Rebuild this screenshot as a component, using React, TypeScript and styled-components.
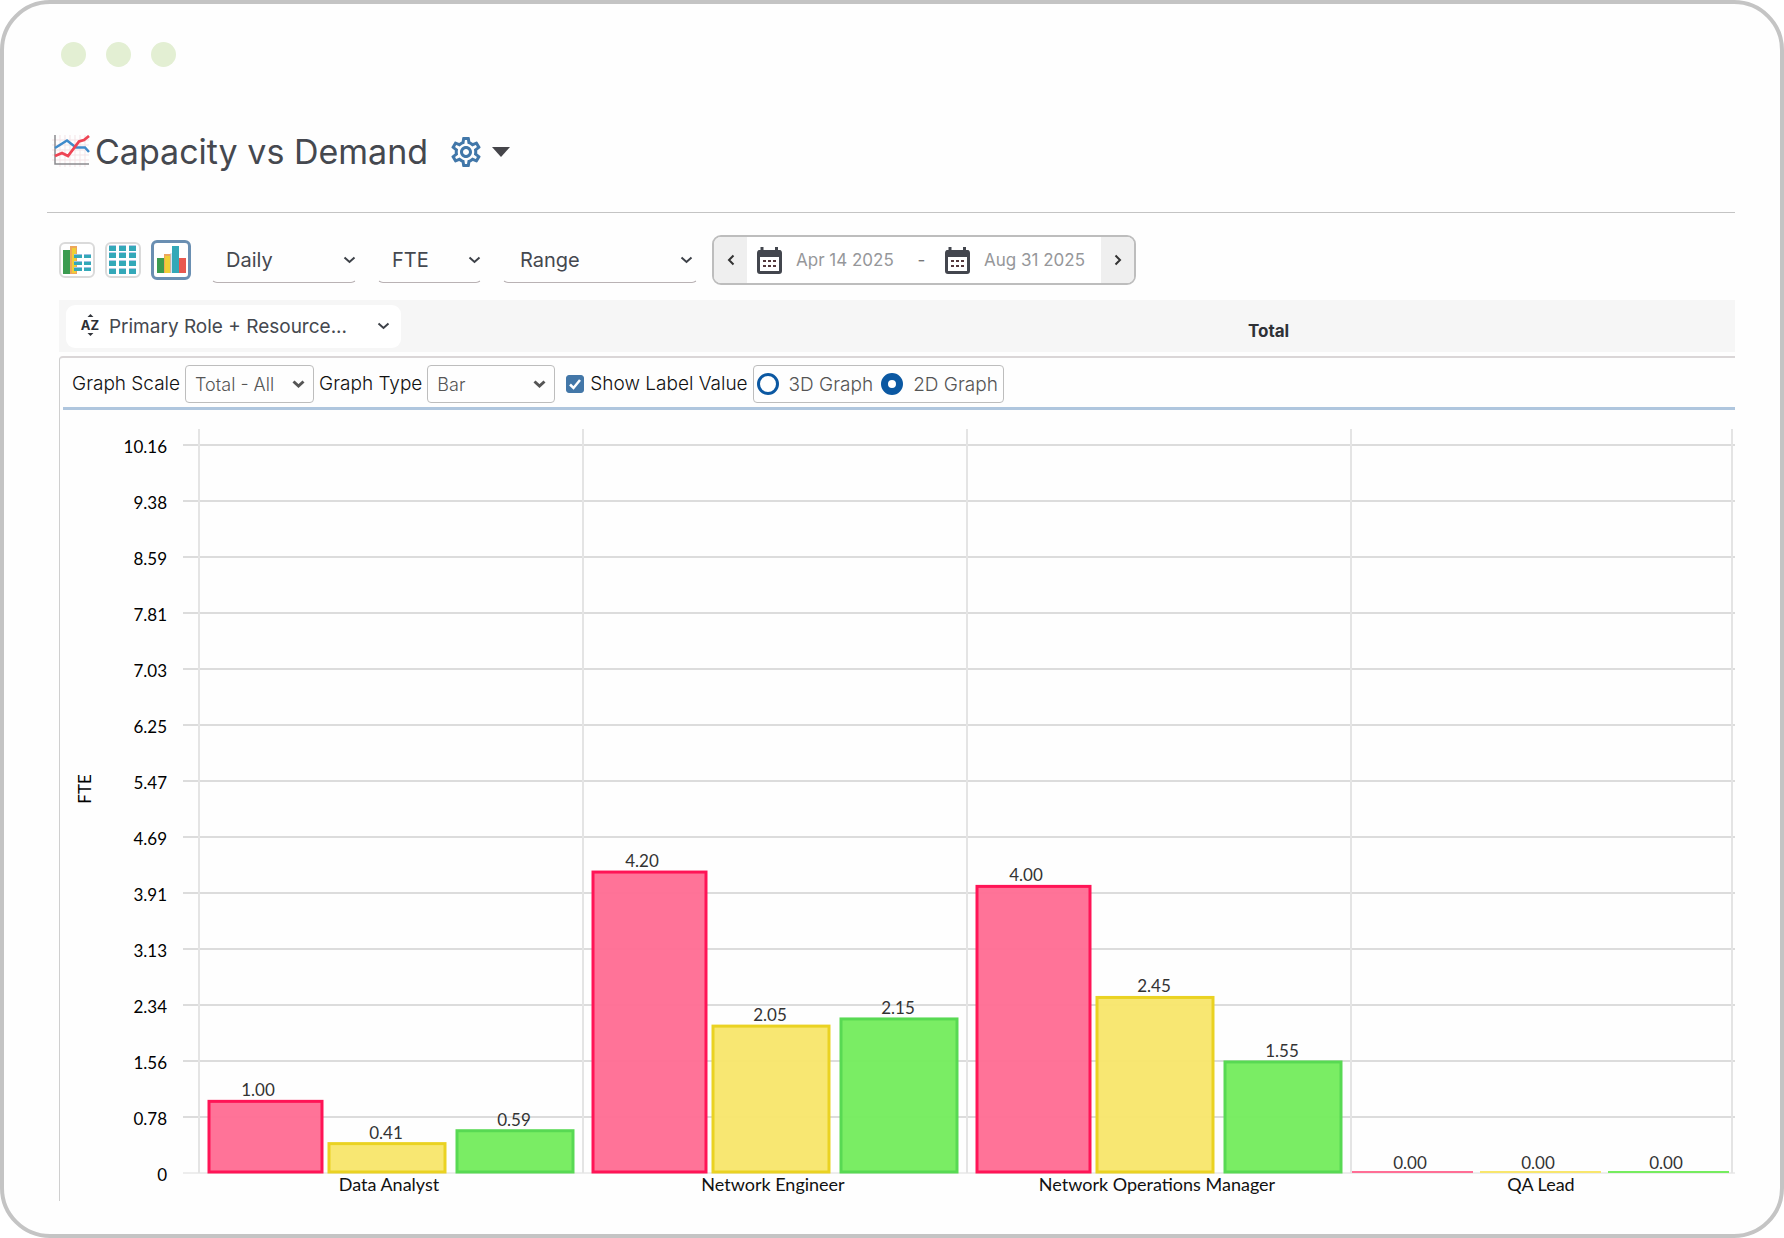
import React, { useState } from "react";
import styled, { createGlobalStyle } from "styled-components";
import { MdOutlineSettings } from "react-icons/md";

const GlobalStyle = createGlobalStyle`
  *, *::before, *::after { box-sizing: border-box; }
  body { margin: 0; background: #fff; font-family: Inter, "Liberation Sans", sans-serif; color: #45484f; }
  button, input, select { font: inherit; color: inherit; margin: 0; }
`;

const Window = styled.main`
  min-height: 100vh;
  padding: 38px 45px 33px 43px;
  border: 4px solid #c4c4c4;
  border-radius: 50px;
  background: #fefefe;
`;

const Dots = styled.div`
  display: flex;
  gap: 20px;
  padding-left: 14px;
`;

const Dot = styled.span`
  width: 25px;
  height: 25px;
  border-radius: 50%;
  background: #e3efd3;
`;

const PageHeader = styled.header`
  display: flex;
  align-items: center;
  padding: 62px 0 38px 5px;
  border-bottom: 1px solid #c4c4c4;
`;

const Title = styled.h1`
  margin: 0 20px 0 5px;
  font-size: 34px;
  line-height: 45px;
  font-weight: 400;
  color: #45484f;
`;

const SettingsButton = styled.button`
  display: flex;
  align-items: center;
  gap: 8px;
  padding: 0;
  border: 0;
  background: none;
  color: #4177a9;
`;

const Toolbar = styled.div`
  display: flex;
  align-items: center;
  padding: 22px 0 15px 12px;
`;

const ViewSwitch = styled.div`
  display: flex;
  align-items: center;
  gap: 10px;
  margin-right: 20px;
`;

const ViewButton = styled.button<{ $active?: boolean }>`
  display: flex;
  width: ${(p) => (p.$active ? 40 : 36)}px;
  height: ${(p) => (p.$active ? 40 : 36)}px;
  padding: 0;
  border: ${(p) => (p.$active ? "3px solid #6a8fb2" : "2px solid #dadada")};
  border-radius: 6px;
  background: #fff;
  align-items: center;
  justify-content: center;
`;

const SelectGroup = styled.div`
  display: flex;
  gap: 20px;
  margin-right: 14px;
`;

const SelectBox = styled.div<{ $width: number; $inset: number }>`
  display: grid;
  grid-template-columns: 1fr auto;
  align-items: center;
  width: ${(p) => p.$width}px;

  & > select { grid-area: 1 / 1 / 2 / 3; }
  & > svg { grid-area: 1 / 2; margin-right: ${(p) => p.$inset}px; pointer-events: none; }
`;

const BaseSelect = styled.select`
  appearance: none;
  width: 100%;
  background: transparent;
  outline: none;
`;

const LineSelect = styled(BaseSelect)<{ $pad?: number }>`
  height: 45px;
  padding: 0 20px 0 ${(p) => p.$pad ?? 14}px;
  border: 1px solid transparent;
  border-bottom-color: #b9b2b4;
  border-radius: 6px;
  font-size: 20px;
`;

const BoxSelect = styled(BaseSelect)`
  height: 38px;
  padding: 0 24px 0 9px;
  border: 1px solid #bdbdbd;
  border-radius: 4px;
  font-size: 18px;
  font-weight: 300;
  color: #555;
`;

const PillSelect = styled(BaseSelect)`
  height: 43px;
  padding: 0;
  border: 0;
  font-size: 19px;
`;

const DateRange = styled.div`
  display: flex;
  align-items: stretch;
  height: 50px;
  border: 2px solid #bdbdbd;
  border-radius: 9px;
  background: #fff;
  overflow: hidden;
`;

const StepButton = styled.button`
  display: flex;
  align-items: center;
  justify-content: center;
  width: 33px;
  padding: 0;
  border: 0;
  background: #efefef;
  color: #333;
`;

const DateFields = styled.div`
  display: flex;
  align-items: center;
  padding: 0 15px 0 10px;
`;

const DateField = styled.label`
  display: flex;
  align-items: center;
  gap: 14px;
`;

const DateInput = styled.input`
  width: 102px;
  padding: 0;
  border: 0;
  background: none;
  font-size: 17px;
  color: #96979a;
  outline: none;
`;

const Dash = styled.span`
  width: 47px;
  text-align: center;
  font-size: 17px;
  color: #777;
`;

const Content = styled.section`
  margin-left: 12px;
`;

const ColumnHeader = styled.div`
  display: grid;
  grid-template-columns: 31fr 39fr;
  align-items: center;
  height: 52px;
  padding-left: 7px;
  background: #f6f6f6;
`;

const RolePill = styled.div`
  display: flex;
  align-items: center;
  gap: 8px;
  width: 335px;
  padding: 0 10px 0 14px;
  border-radius: 9px;
  background: #fff;
`;

const TotalHeading = styled.h2`
  margin: 0;
  padding: 10px 3px 0 0;
  text-align: center;
  font-size: 17px;
  line-height: 20px;
  font-weight: 700;
  color: #2f3136;
`;

const Panel = styled.div`
  margin-top: 4px;
  border-top: 2px solid #dad6d7;
  border-left: 1px solid #cfcfcf;
  border-top-left-radius: 4px;
`;

const GraphControls = styled.form`
  display: flex;
  align-items: center;
  gap: 5px;
  margin-left: 3px;
  padding: 7px 0 4px 9px;
  border-bottom: 3px solid #afc6de;
`;

const ControlLabel = styled.label`
  font-size: 19px;
  line-height: 24px;
  font-weight: 300;
  color: #111;
`;

const CheckLabel = styled(ControlLabel)`
  display: grid;
  grid-template-columns: 18px auto;
  align-items: center;
  column-gap: 6px;
  margin-left: 6px;

  & > input, & > svg { grid-area: 1 / 1; }
  & > svg { pointer-events: none; justify-self: center; }
`;

const Checkbox = styled.input`
  appearance: none;
  width: 18px;
  height: 18px;
  border: 1px solid #4377a8;
  border-radius: 3px;
  background: #fff;

  &:checked { background: #4377a8; }
`;

const RadioGroup = styled.fieldset`
  display: flex;
  align-items: center;
  gap: 8px;
  height: 38px;
  margin: 0;
  padding: 0 5px 0 3px;
  border: 1px solid #bdbdbd;
  border-radius: 4px;
`;

const RadioLabel = styled.label`
  display: flex;
  align-items: center;
  gap: 10px;
  font-size: 19px;
  font-weight: 300;
  color: #555;
`;

const Radio = styled.input`
  appearance: none;
  width: 22px;
  height: 22px;
  border: 3px solid #0b58a2;
  border-radius: 50%;
  background: #fff;

  &:checked { border-width: 7px; }
`;

const ChartSvg = styled.svg`
  display: block;
  width: 100%;
  height: auto;
  font-family: Lato, Carlito, sans-serif;
`;

const AxisText = styled.text`
  font-size: 17px;
  fill: #000;
`;

const CategoryText = styled.text`
  font-size: 18px;
  fill: #111;
  text-anchor: middle;
`;

const ValueText = styled.text`
  font-size: 17px;
  fill: #333;
  text-anchor: middle;
`;

const Chevron = ({ heavy }: { heavy?: boolean }) => (
  <svg width="13" height="8" viewBox="0 0 13 8" fill="none" stroke={heavy ? "#555" : "#3d4148"} strokeWidth={heavy ? 3 : 2}>
    <path d="M1.5 1.5 6.5 6l5-4.5" />
  </svg>
);

const Arrow = ({ right }: { right?: boolean }) => (
  <svg width="8" height="12" viewBox="0 0 8 12" fill="none" stroke="currentColor" strokeWidth="2">
    <path d={right ? "M1.5 1.5 6 6l-4.500 4.500" : "M6.500 1.500 2 6l4.500 4.500"} />
  </svg>
);

const TitleIcon = () => (
  <svg width="38" height="33" viewBox="0 0 38 33" fill="none">
    <path d="M8 0v32M13 0v32M18 0v32M23 0v32M28 0v32M33 0v32M0 5h37M0 10h37M0 15h37M0 20h37M0 25h37" stroke="#f3e3e6" />
    <path d="M3 0v29h34" stroke="#8b8b8f" strokeWidth="1.500" />
    <path d="M3 13 15 5.500 24 12.500h9l4 4.500" stroke="#3f8bcb" strokeWidth="2.500" />
    <path d="m3 21 7-3 6 3L27 6.500l5-1.500 5-4" stroke="#ee4454" strokeWidth="2.800" />
  </svg>
);

const Calendar = () => (
  <svg width="25" height="27" viewBox="0 0 25 27">
    <path d="M5 0v4M19.500 0v4" stroke="#43464e" strokeWidth="3" />
    <rect x="1.500" y="4.500" width="22" height="21" rx="1.500" fill="#fff" stroke="#43464e" strokeWidth="3" />
    <path d="M1.500 3h22v7h-22z" fill="#43464e" />
    <path d="M6 13h3v2H6zM11 13h3v2h-3zM16 13h3v2h-3zM6 18h3v2H6zM11 18h3v2h-3zM16 18h3v2h-3z" fill="#55383c" />
  </svg>
);

const SplitIcon = () => (
  <svg width="32" height="32" viewBox="2 2 32 32">
    <rect x="4" y="8" width="7" height="24" fill="#3b9b50" />
    <rect x="11" y="4" width="7" height="28" fill="#eda65c" />
    <rect x="13" y="6" width="4" height="25" fill="#efcf35" />
    {[12, 19, 25].map((y) => (
      <g key={y}>
        <path d={`M15 ${y}h8v4h-8zM25 ${y}h7v4h-7z`} fill="#33a8b8" />
        <path d={`M15 ${y}h8v1h-8zM25 ${y}h7v1h-7z`} fill="#9fbfe2" />
      </g>
    ))}
  </svg>
);

const TableIcon = () => (
  <svg width="32" height="32" viewBox="2 2 32 32">
    {[4, 11, 19, 27].map((y) => (
      <g key={y}>
        <path d={`M4 ${y}h7v5H4zM14 ${y}h7v5h-7zM24 ${y}h7v5h-7z`} fill="#33a8b8" />
        <path d={`M4 ${y - 1}h7v1H4zM14 ${y - 1}h7v1h-7zM24 ${y - 1}h7v1h-7z`} fill="#b4c9e4" />
      </g>
    ))}
  </svg>
);

const BarsIcon = () => (
  <svg width="34" height="34" viewBox="3 3 34 34">
    <rect x="6" y="18" width="7" height="15" fill="#3b9b50" />
    <rect x="13" y="14" width="7" height="19" fill="#eda65c" />
    <rect x="14" y="16" width="5" height="17" fill="#efcf35" />
    <rect x="21" y="6" width="7" height="27" fill="#33a8b8" />
    <rect x="28" y="18" width="7" height="15" fill="#e9584f" />
    <path d="M20 13v20" stroke="#b4c9e4" />
  </svg>
);

const SortIcon = () => (
  <svg width="21" height="24" viewBox="0 0 21 24">
    <path d="m10.500 0 3 3h-6zM10.500 22l3-3h-6z" fill="#33363c" />
    <text x="10" y="16" textAnchor="middle" fontFamily="Inter, sans-serif" fontSize="13" fontWeight="700" fill="#2b2e33">AZ</text>
  </svg>
);

type Tone = { fill: string; edge: string };

const tones: Tone[] = [
  { fill: "#ff6e95", edge: "#ff1456" },
  { fill: "#f8e66d", edge: "#ead222" },
  { fill: "#76ec5f", edge: "#58d953" },
];

const roles = [
  { name: "Data Analyst", values: [1.0, 0.41, 0.59] },
  { name: "Network Engineer", values: [4.2, 2.05, 2.15] },
  { name: "Network Operations Manager", values: [4.0, 2.45, 1.55] },
  { name: "QA Lead", values: [0, 0, 0] },
];

const ticks = ["10.16", "9.38", "8.59", "7.81", "7.03", "6.25", "5.47", "4.69", "3.91", "3.13", "2.34", "1.56", "0.78", "0"];

const chart = { width: 1675, height: 791, left: 139, right: 1672, top: 35, base: 763 };
const groupWidth = 384;
const barOffsets = [9, 129, 257];
const barWidths = [116, 119, 119];

const yOf = (value: number) => chart.base - (value / 10.16) * (chart.base - chart.top);

const Chart = () => (
  <ChartSvg viewBox={`0 0 ${chart.width} ${chart.height}`} role="img" aria-label="Capacity vs Demand">
    {ticks.map((tick, i) => {
      const y = chart.top + (i * (chart.base - chart.top)) / (ticks.length - 1);
      return (
        <g key={tick}>
          <line x1={123} x2={chart.width} y1={y} y2={y} stroke="#dcdcdc" strokeWidth={i === ticks.length - 1 ? 1 : 2} />
          <AxisText x={107} y={y + 8} textAnchor="end">{tick}</AxisText>
        </g>
      );
    })}
    {[0, 1, 2, 3, 4].map((i) => {
      const x = Math.min(chart.left + i * groupWidth, chart.right);
      return <line key={i} x1={x} x2={x} y1={19} y2={chart.base} stroke="#e4e4e4" strokeWidth="2" />;
    })}
    {roles.map((role, g) => {
      const left = chart.left + g * groupWidth;
      return (
        <g key={role.name}>
          {role.values.map((value, i) => {
            const top = yOf(value);
            const x = left + barOffsets[i];
            return (
              <g key={i}>
                {value > 0 ? (
                  <rect x={x + 1} y={top} width={barWidths[i] - 3} height={chart.base - top - 1} fill={tones[i].fill} fillOpacity="0.97" stroke={tones[i].edge} strokeWidth="3" />
                ) : (
                  <rect x={left + 1 + i * 128} y={chart.base - 2} width="121" height="2" fill={tones[i].fill} />
                )}
                <ValueText x={left + 59 + i * 128} y={value > 0 ? top - 5 : top - 4}>{value.toFixed(2)}</ValueText>
              </g>
            );
          })}
          <CategoryText x={left + groupWidth / 2 - 2} y={chart.base + 18}>{role.name}</CategoryText>
        </g>
      );
    })}
    <AxisText transform="translate(31 379) rotate(-90)" textAnchor="middle">FTE</AxisText>
  </ChartSvg>
);

export default function App() {
  const [labels, setLabels] = useState(true);
  const [mode, setMode] = useState("2d");
  const [from, setFrom] = useState("Apr 14 2025");
  const [to, setTo] = useState("Aug 31 2025");

  return (
    <>
      <GlobalStyle />
      <Window>
        <Dots>
          <Dot />
          <Dot />
          <Dot />
        </Dots>
        <PageHeader>
          <TitleIcon />
          <Title>Capacity vs Demand</Title>
          <SettingsButton type="button" aria-label="Settings">
            <MdOutlineSettings size={36} />
            <svg width="18" height="10" viewBox="0 0 18 10"><path d="M0 0h18L9 10z" fill="#45454a" /></svg>
          </SettingsButton>
        </PageHeader>
        <Toolbar>
          <ViewSwitch>
            <ViewButton type="button" aria-label="Split view"><SplitIcon /></ViewButton>
            <ViewButton type="button" aria-label="Table view"><TableIcon /></ViewButton>
            <ViewButton type="button" aria-label="Graph view" $active><BarsIcon /></ViewButton>
          </ViewSwitch>
          <SelectGroup>
            <SelectBox $width={146} $inset={1}>
              <LineSelect aria-label="Interval"><option>Daily</option></LineSelect>
              <Chevron />
            </SelectBox>
            <SelectBox $width={105} $inset={1}>
              <LineSelect aria-label="Unit"><option>FTE</option></LineSelect>
              <Chevron />
            </SelectBox>
            <SelectBox $width={196} $inset={5}>
              <LineSelect aria-label="Period" $pad={17}><option>Range</option></LineSelect>
              <Chevron />
            </SelectBox>
          </SelectGroup>
          <DateRange>
            <StepButton type="button" aria-label="Previous"><Arrow /></StepButton>
            <DateFields>
              <DateField>
                <Calendar />
                <DateInput aria-label="From" value={from} onChange={(e) => setFrom(e.target.value)} />
              </DateField>
              <Dash>-</Dash>
              <DateField>
                <Calendar />
                <DateInput aria-label="To" value={to} onChange={(e) => setTo(e.target.value)} />
              </DateField>
            </DateFields>
            <StepButton type="button" aria-label="Next"><Arrow right /></StepButton>
          </DateRange>
        </Toolbar>
        <Content>
          <ColumnHeader>
            <RolePill>
              <SortIcon />
              <SelectBox $width={283} $inset={1}>
                <PillSelect aria-label="Group by"><option>Primary Role + Resource...</option></PillSelect>
                <Chevron />
              </SelectBox>
            </RolePill>
            <TotalHeading>Total</TotalHeading>
          </ColumnHeader>
          <Panel>
            <GraphControls>
              <ControlLabel htmlFor="scale">Graph Scale</ControlLabel>
              <SelectBox $width={129} $inset={9}>
                <BoxSelect id="scale"><option>Total - All</option></BoxSelect>
                <Chevron heavy />
              </SelectBox>
              <ControlLabel htmlFor="type">Graph Type</ControlLabel>
              <SelectBox $width={128} $inset={9}>
                <BoxSelect id="type"><option>Bar</option></BoxSelect>
                <Chevron heavy />
              </SelectBox>
              <CheckLabel>
                <Checkbox type="checkbox" checked={labels} onChange={(e) => setLabels(e.target.checked)} />
                <svg width="14" height="14" viewBox="0 0 14 14" fill="none" stroke="#fff" strokeWidth="2.500"><path d="m2 7.500 3.500 3.500L12 3" /></svg>
                Show Label Value
              </CheckLabel>
              <RadioGroup>
                <RadioLabel>
                  <Radio type="radio" name="mode" checked={mode === "3d"} onChange={() => setMode("3d")} />
                  3D Graph
                </RadioLabel>
                <RadioLabel>
                  <Radio type="radio" name="mode" checked={mode === "2d"} onChange={() => setMode("2d")} />
                  2D Graph
                </RadioLabel>
              </RadioGroup>
            </GraphControls>
            <Chart />
          </Panel>
        </Content>
      </Window>
    </>
  );
}
